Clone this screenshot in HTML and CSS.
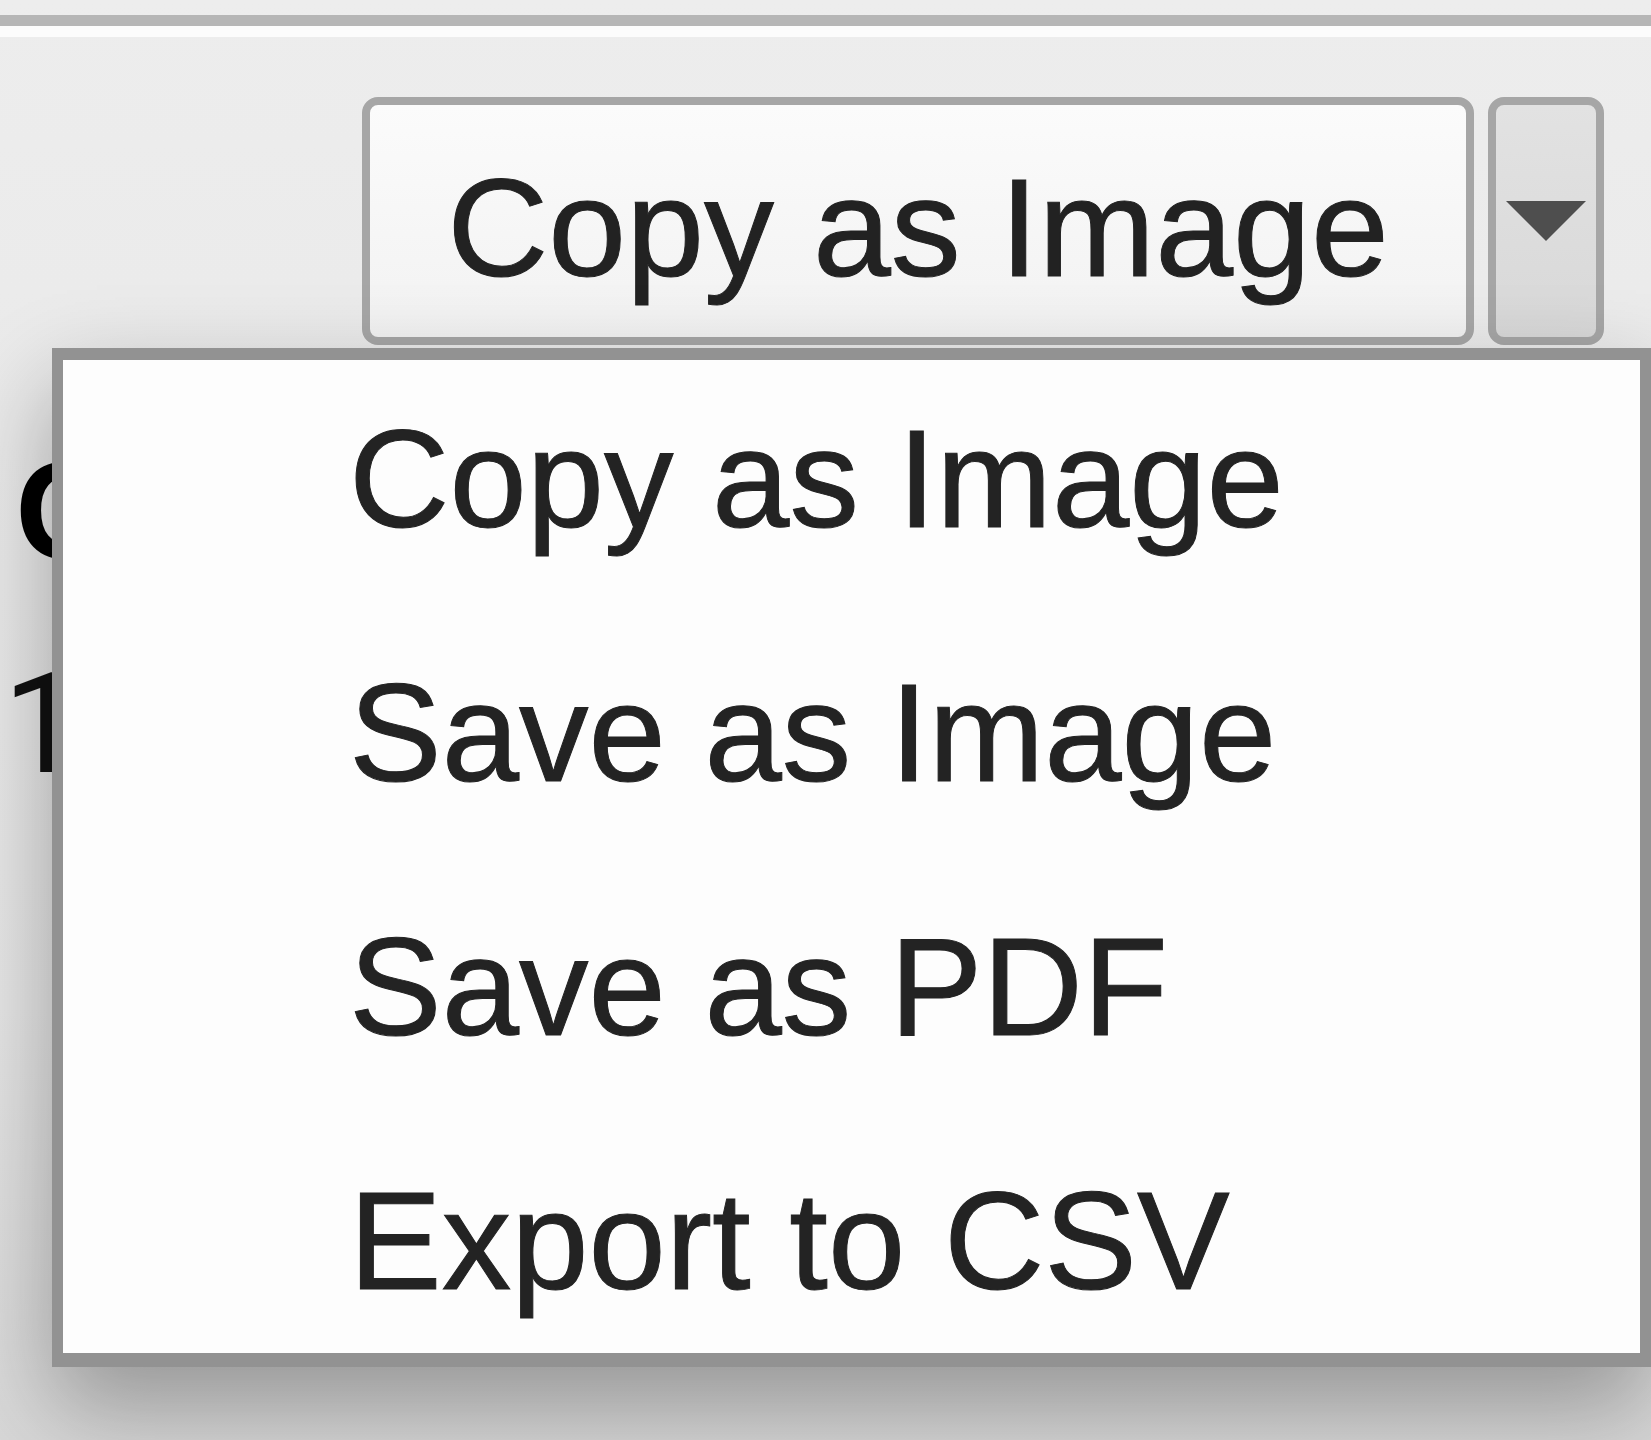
FILE: index.html
```html
<!DOCTYPE html>
<html lang="en">
<head>
<meta charset="utf-8">
<title>Copy as Image menu</title>
<link rel="stylesheet" href="styles.css">
</head>
<body>
<div class="window">
  <div class="edge"><div class="edge-dark"></div><div class="edge-light"></div></div>
  <div class="toolbar">
    <div class="split">
      <button class="split-main" type="button">Copy as Image</button>
      <button class="split-arrow" type="button" aria-label="More options">
        <svg class="caret" viewBox="0 0 80 40" width="80" height="40"><polygon points="0,0 80,0 40,40"/></svg>
      </button>
    </div>
  </div>
  <div class="content">
    <div class="heading">C</div>
    <div class="value">1</div>
  </div>
  <ul class="menu">
    <li class="menu-item">Copy as Image</li>
    <li class="menu-item">Save as Image</li>
    <li class="menu-item">Save as PDF</li>
    <li class="menu-item last">Export to CSV</li>
  </ul>
</div>
</body>
</html>
```

FILE: styles.css
```css
html, body {
  margin: 0;
  padding: 0;
}
body {
  background: #ececec;
  font-family: "Liberation Sans", Arial, sans-serif;
  width: 1651px;
  height: 1440px;
  overflow: hidden;
}
.window {
  position: relative;
  width: 1651px;
  height: 1440px;
  background: linear-gradient(#ededed, #e6e6e6 70%, #d8d8d8);
}
.edge {
  padding-top: 15px;
}
.edge-dark {
  height: 11px;
  background: #b6b6b6;
}
.edge-light {
  height: 11px;
  background: #fcfcfc;
}
.toolbar {
  display: flex;
  justify-content: flex-end;
  padding: 60px 47px 0 0;
}
.split {
  display: flex;
  gap: 14px;
}
.split-main {
  box-sizing: border-box;
  width: 1112px;
  height: 248px;
  border: 8px solid #a6a6a6;
  border-radius: 16px;
  background: linear-gradient(#fbfbfb, #f2f2f2);
  font-family: "Liberation Sans", Arial, sans-serif;
  font-size: 140px;
  line-height: 218px;
  padding: 14px 0 0 0;
  color: #222;
  -webkit-text-stroke: 1px #222;
  text-align: center;
  vertical-align: top;
}
.split-arrow {
  box-sizing: border-box;
  width: 116px;
  height: 248px;
  border: 8px solid #a6a6a6;
  border-radius: 16px;
  background: linear-gradient(#e2e2e2, #d8d8d8);
  padding: 0;
  display: flex;
  align-items: center;
  justify-content: center;
}
.caret {
  display: block;
  fill: #4e4e4e;
}
.content {
  padding: 86px 0 0 15px;
}
.heading {
  font-size: 140px;
  font-weight: bold;
  line-height: 160px;
  color: #000;
  white-space: nowrap;
}
.value {
  margin-top: 53px;
  margin-left: -12px;
  font-family: Roboto, "Liberation Sans", sans-serif;
  font-size: 140px;
  line-height: 160px;
  color: #111;
  white-space: nowrap;
}
.menu {
  position: absolute;
  left: 52px;
  top: 348px;
  box-sizing: border-box;
  width: 1599px;
  height: 1019px;
  margin: 0;
  padding: 0 0 0 286px;
  list-style: none;
  background: #fdfdfd;
  border-style: solid;
  border-color: #929292;
  border-width: 12px 11px 14px 11px;
  box-shadow: 0 40px 90px rgba(0, 0, 0, 0.32);
  overflow: hidden;
}
.menu-item {
  font-size: 139px;
  line-height: 154px;
  padding: 42px 0 58px 0;
  color: #232323;
  -webkit-text-stroke: 1px #232323;
  white-space: nowrap;
}
.menu-item.last {
  padding-bottom: 35px;
}
```
